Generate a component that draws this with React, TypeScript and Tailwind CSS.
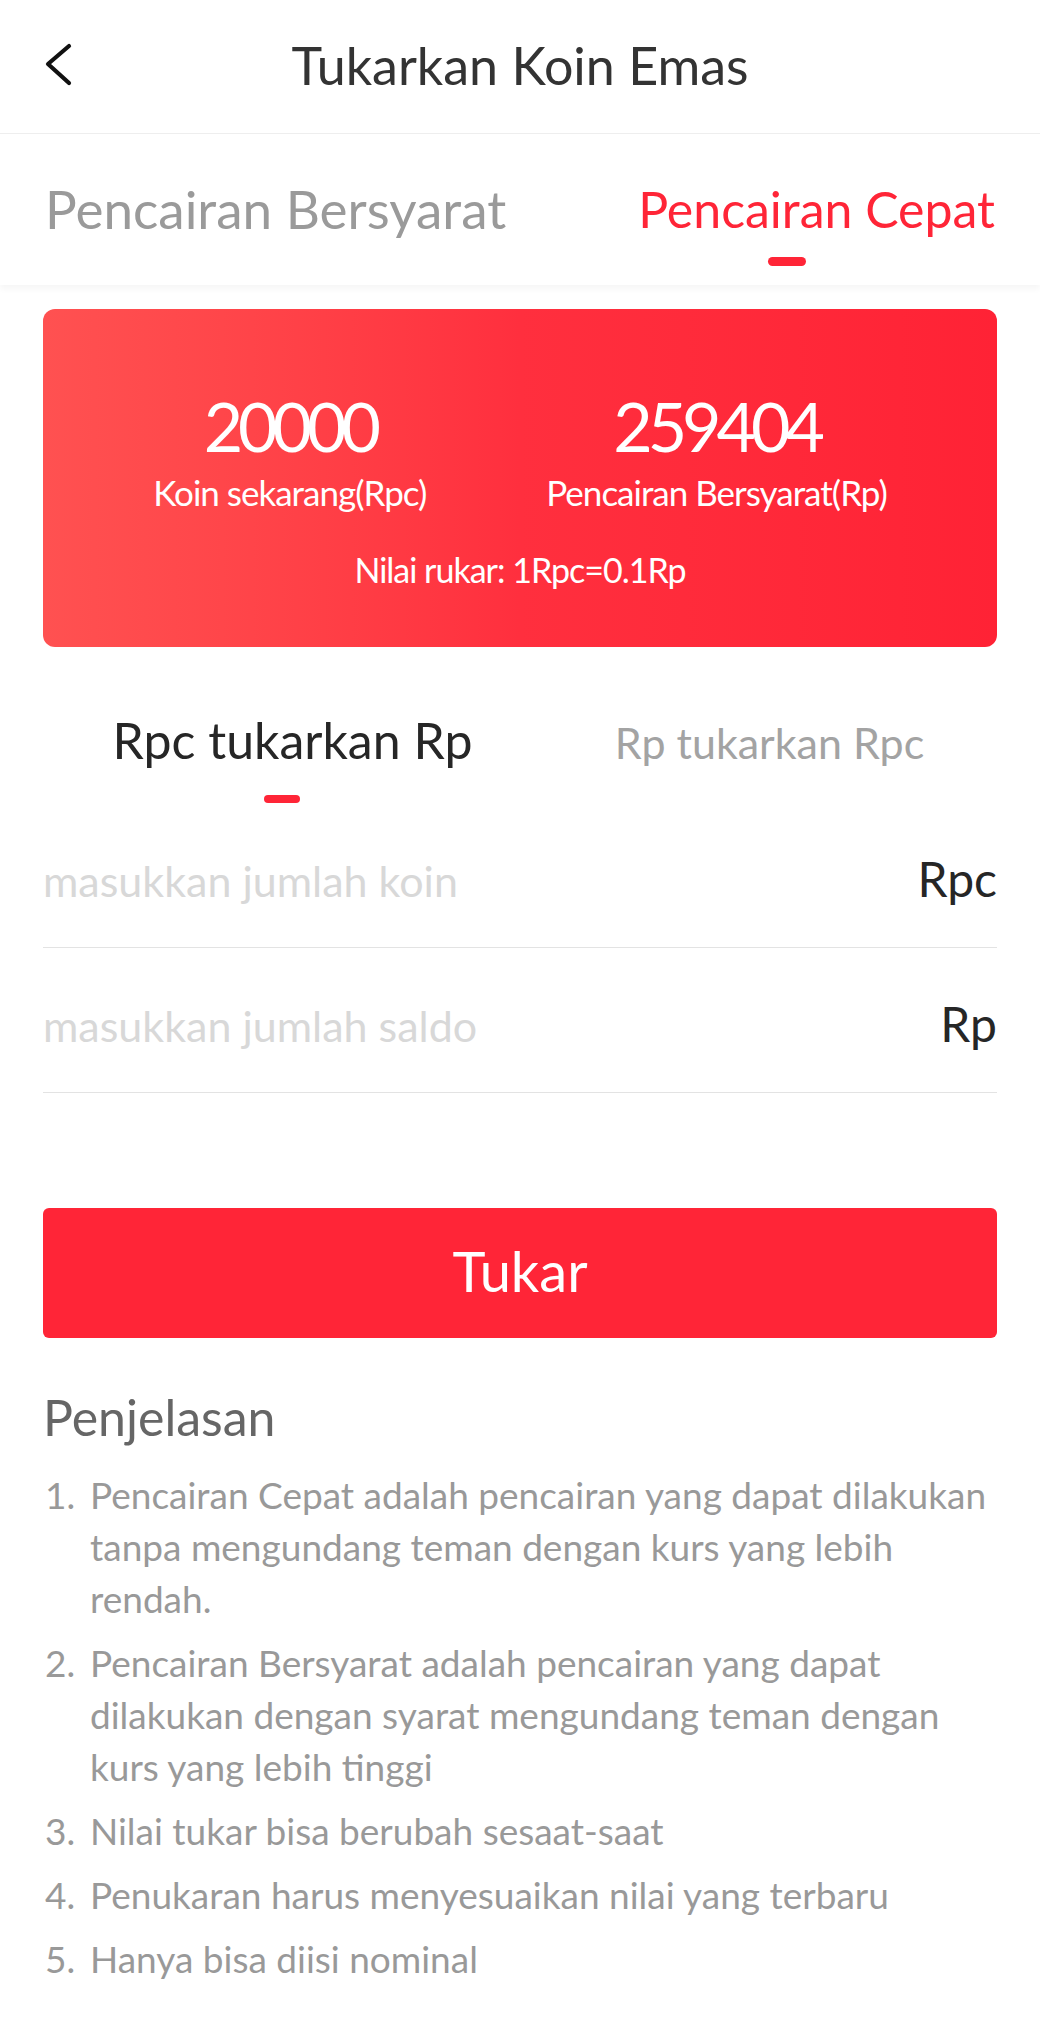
import { ChangeEvent, useState } from 'react';

const FONT = { fontFamily: 'Lato, "Noto Sans", sans-serif' };

const NOTES = [
  'Pencairan Cepat adalah pencairan yang dapat dilakukan tanpa mengundang teman dengan kurs yang lebih rendah.',
  'Pencairan Bersyarat adalah pencairan yang dapat dilakukan dengan syarat mengundang teman dengan kurs yang lebih tinggi',
  'Nilai tukar bisa berubah sesaat-saat',
  'Penukaran harus menyesuaikan nilai yang terbaru',
  'Hanya bisa diisi nominal',
];

export default function App() {
  const [coin, setCoin] = useState('');
  const [saldo, setSaldo] = useState('');

  return (
    <div className="w-[1040px] min-h-screen bg-white" style={FONT}>
      {/* Header */}
      <header className="grid h-[134px] grid-cols-[1fr_auto_1fr] items-center border-b border-[#eeeeee] pb-[4px]">
        <button className="pl-[43px]">
          <svg width="30" height="44" viewBox="0 0 30 44" fill="none">
            <path d="M26 3 L5 21 L26 40" stroke="#111" strokeWidth="4.2" strokeLinecap="round" strokeLinejoin="round" />
          </svg>
        </button>
        <h1 className="text-[52px] leading-none text-[#333333]">Tukarkan Koin Emas</h1>
        <div />
      </header>

      {/* Top tabs */}
      <div className="flex h-[151px] items-start justify-between px-[45px] pt-[48px] shadow-[0_4px_6px_rgba(0,0,0,0.04)]">
        <span className="text-[53px] leading-[54px] text-[#9a9a9a]">Pencairan Bersyarat</span>
        <div className="flex flex-col items-end">
          <span className="text-[50px] leading-[54px] text-[#ff2537]">Pencairan Cepat</span>
          <span className="mr-[189px] mt-[21px] h-[9px] w-[38px] rounded-full bg-[#ff2537]" />
        </div>
      </div>

      <main className="px-[43px] pt-[24px]">
        {/* Balance card */}
        <div className="flex h-[338px] flex-col items-center rounded-[12px] bg-gradient-to-r from-[#ff5151] via-[#ff2f3e] to-[#ff2235] pt-[77px] text-white">
          <div className="flex justify-center gap-[120px]">
            <div className="flex flex-col items-center">
              <span className="text-[68px] leading-[80px] tracking-[-5px]">20000</span>
              <span className="mt-[6px] text-[35px] leading-[40px] tracking-[-1px]">Koin sekarang(Rpc)</span>
            </div>
            <div className="flex flex-col items-center">
              <span className="text-[68px] leading-[80px] tracking-[-5px]">259404</span>
              <span className="mt-[6px] text-[35px] leading-[40px] tracking-[-1px]">Pencairan Bersyarat(Rp)</span>
            </div>
          </div>
          <span className="mt-[38px] text-[34px] leading-[40px] tracking-[-1px]">Nilai rukar: 1Rpc=0.1Rp</span>
        </div>

        {/* Exchange direction tabs */}
        <div className="mt-[63px] grid grid-cols-2">
          <div className="flex flex-col items-center">
            <span className="pl-[22px] text-[50px] leading-[60px] text-[#262626]">Rpc tukarkan Rp</span>
            <span className="mt-[25px] h-[8px] w-[36px] rounded-full bg-[#ff2537]" />
          </div>
          <div className="flex flex-col items-center">
            <span className="pl-[22px] pt-[3px] text-[43px] leading-[60px] text-[#a3a3a3]">Rp tukarkan Rpc</span>
          </div>
        </div>

        {/* Inputs */}
        <label className="flex h-[145px] items-baseline justify-between border-b border-[#e3e3e3] pt-[46px]">
          <input
            value={coin}
            onChange={(e: ChangeEvent<HTMLInputElement>) => setCoin(e.target.value)}
            placeholder="masukkan jumlah koin"
            className="h-[60px] flex-1 text-[43px] leading-[60px] text-[#333] outline-none placeholder:text-[#d8d8d8]"
          />
          <span className="text-[48px] leading-[60px] text-[#262626]">Rpc</span>
        </label>
        <label className="flex h-[145px] items-baseline justify-between border-b border-[#e3e3e3] pt-[46px]">
          <input
            value={saldo}
            onChange={(e: ChangeEvent<HTMLInputElement>) => setSaldo(e.target.value)}
            placeholder="masukkan jumlah saldo"
            className="h-[60px] flex-1 text-[43px] leading-[60px] text-[#333] outline-none placeholder:text-[#d8d8d8]"
          />
          <span className="text-[48px] leading-[60px] text-[#262626]">Rp</span>
        </label>

        <button className="mt-[115px] flex h-[130px] w-full items-center justify-center rounded-[6px] bg-[#ff2537] pb-[4px] text-[56px] leading-none text-white">
          Tukar
        </button>

        {/* Explanation */}
        <h2 className="mt-[49px] text-[50px] leading-[60px] text-[#666666]">Penjelasan</h2>
        <ol className="mt-[22px] space-y-[12px] pb-[40px]">
          {NOTES.map((note, i) => (
            <li key={i} className="flex text-[37px] leading-[52px] text-[#999999]">
              <span className="w-[47px] shrink-0 pl-[2px]">{i + 1}.</span>
              <span className="w-[910px]">{note}</span>
            </li>
          ))}
        </ol>
      </main>
    </div>
  );
}
